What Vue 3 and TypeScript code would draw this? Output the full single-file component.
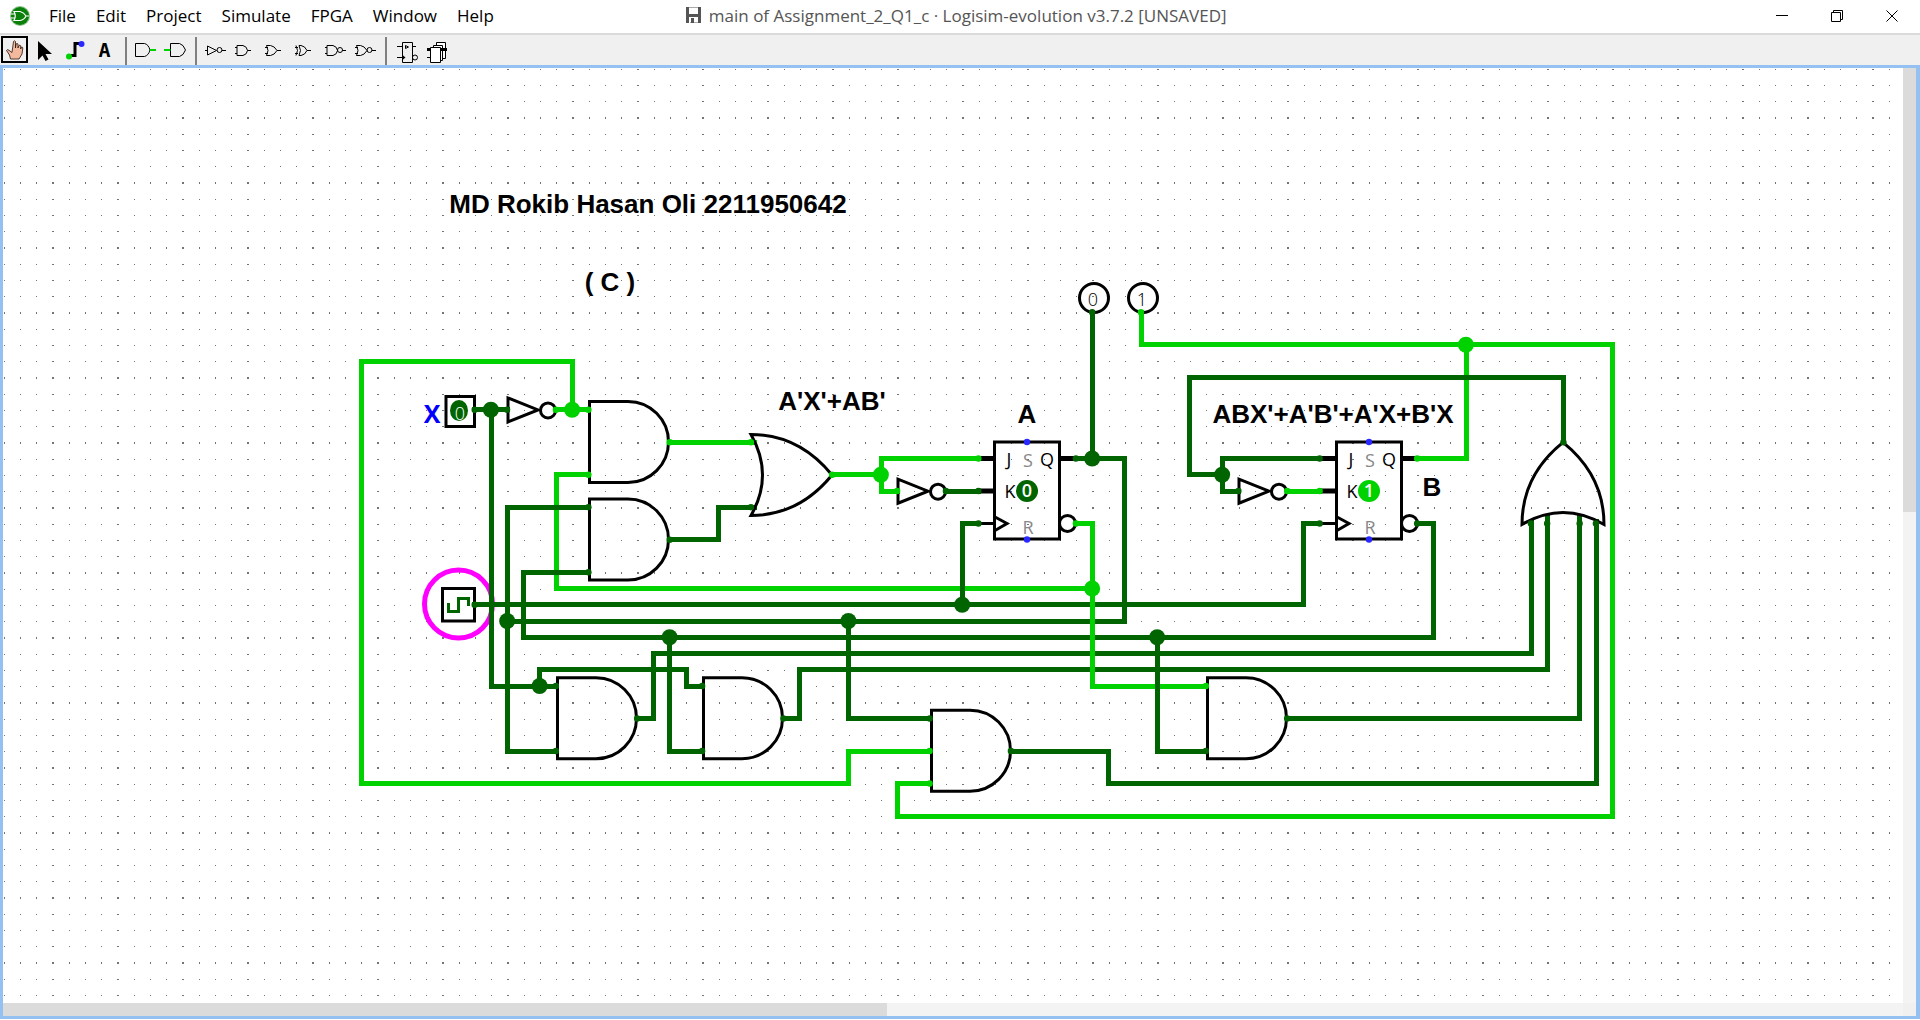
<script setup lang="ts">
type Point = [number, number]
interface Wire { on: boolean; path: Point[] }
interface Node { on: boolean; at: Point }

const menus = ['File', 'Edit', 'Project', 'Simulate', 'FPGA', 'Window', 'Help']

// The schematic is described in grid cells; one cell is 16.25 px at this zoom level.
const CELL = 16.25
const gx = (c: number) => 3.7 + CELL * c
const gy = (r: number) => 68.7 + CELL * r
const snap = (v: number) => Math.floor(v) + 0.5
const points = (path: Point[]) => path.map(([c, r]) => `${snap(gx(c))},${snap(gy(r))}`).join(' ')
const place = ([c, r]: Point) => `translate(${Math.floor(gx(c))} ${gy(r)})`
const placeBox = ([c, r]: Point) => `translate(${Math.round(gx(c) + 0.3)} ${gy(r)})`

const wires: Wire[] = [
  { on: true, path: [[35, 21], [35, 18], [22, 18], [22, 44], [52, 44], [52, 42], [57, 42]] },
  { on: true, path: [[34, 21], [36, 21]] },
  { on: true, path: [[41, 23], [46, 23]] },
  { on: true, path: [[36, 25], [34, 25], [34, 32], [67, 32]] },
  { on: true, path: [[51, 25], [54, 25]] },
  { on: true, path: [[60, 24], [54, 24], [54, 26], [55, 26]] },
  { on: true, path: [[70, 15], [70, 17], [99, 17], [99, 46], [55, 46], [55, 44], [57, 44]] },
  { on: true, path: [[87, 24], [90, 24], [90, 17]] },
  { on: true, path: [[79, 26], [81, 26]] },
  { on: true, path: [[67, 38], [74, 38]] },
  { on: false, path: [[29, 21], [31, 21]] },
  { on: false, path: [[30, 21], [30, 38], [34, 38]] },
  { on: false, path: [[36, 27], [31, 27], [31, 42], [34, 42]] },
  { on: false, path: [[41, 29], [44, 29], [44, 27], [46, 27]] },
  { on: false, path: [[58, 26], [60, 26]] },
  { on: false, path: [[60, 28], [59, 28], [59, 33]] },
  { on: false, path: [[66, 24], [69, 24], [69, 34], [31, 34]] },
  { on: false, path: [[67, 24], [67, 15]] },
  { on: false, path: [[29, 33], [80, 33], [80, 28], [81, 28]] },
  { on: false, path: [[87, 28], [88, 28], [88, 35], [32, 35], [32, 31], [36, 31]] },
  { on: false, path: [[33, 38], [33, 37], [42, 37], [42, 38], [43, 38]] },
  { on: false, path: [[39, 40], [40, 40], [40, 36], [94, 36], [94, 28]] },
  { on: false, path: [[48, 40], [49, 40], [49, 37], [95, 37], [95, 28]] },
  { on: false, path: [[41, 35], [41, 42], [43, 42]] },
  { on: false, path: [[52, 34], [52, 40], [57, 40]] },
  { on: false, path: [[62, 42], [68, 42], [68, 44], [98, 44], [98, 28]] },
  { on: false, path: [[79, 40], [97, 40], [97, 28]] },
  { on: false, path: [[71, 35], [71, 42], [74, 42]] },
  { on: false, path: [[96, 23], [96, 19], [73, 19], [73, 25], [75, 25]] },
  { on: false, path: [[81, 24], [75, 24], [75, 26], [76, 26]] },
  { on: true, path: [[66, 28], [67, 28], [67, 38]] },
]

const junctions: Node[] = [
  { on: true, at: [35, 21] }, { on: true, at: [54, 25] }, { on: true, at: [67, 32] }, { on: true, at: [90, 17] },
  { on: false, at: [30, 21] }, { on: false, at: [33, 38] }, { on: false, at: [31, 34] }, { on: false, at: [41, 35] },
  { on: false, at: [52, 34] }, { on: false, at: [59, 33] }, { on: false, at: [67, 24] }, { on: false, at: [71, 35] },
  { on: false, at: [75, 25] },
]

const ports: Node[] = [
  ...([[34, 21], [36, 21], [36, 25], [41, 23], [46, 23], [51, 25], [55, 26], [60, 24], [66, 28], [70, 15],
    [74, 38], [57, 42], [57, 44], [79, 26], [81, 26], [87, 24]] as Point[]).map((at) => ({ on: true, at })),
  ...([[29, 21], [31, 21], [36, 27], [36, 31], [41, 29], [46, 27], [58, 26], [60, 26], [60, 28], [66, 24],
    [67, 15], [29, 33], [34, 38], [34, 42], [39, 40], [43, 38], [43, 42], [48, 40], [57, 40], [62, 42],
    [74, 42], [79, 40], [96, 23], [94, 28], [95, 28], [97, 28], [98, 28], [76, 26], [81, 24], [81, 28],
    [87, 28]] as Point[]).map((at) => ({ on: false, at })),
]

const andGates: Point[] = [[41, 23], [41, 29], [39, 40], [48, 40], [62, 42], [79, 40]]
const inverters: Point[] = [[31, 21], [55, 26], [76, 26]]
const flipFlops: { at: Point; value: string; on: boolean }[] = [
  { at: [61, 23], value: '0', on: false },
  { at: [82, 23], value: '1', on: true },
]
const outputs: { at: Point; value: string }[] = [
  { at: [67, 15], value: '0' },
  { at: [70, 15], value: '1' },
]
const labels = [
  { text: 'MD Rokib Hasan Oli 2211950642', x: 648, y: 213 },
  { text: '( C )', x: 610, y: 291 },
  { text: "A'X'+AB'", x: 832, y: 410 },
  { text: 'A', x: 1027, y: 423 },
  { text: "ABX'+A'B'+A'X+B'X", x: 1333, y: 423 },
  { text: 'B', x: 1432, y: 496 },
]
</script>

<template>
  <div class="window">
    <header class="titlebar">
      <svg class="app-icon" width="22" height="22" viewBox="0 0 22 22" aria-hidden="true">
        <circle cx="11" cy="11" r="10" fill="#8cc08c" />
        <circle cx="11" cy="11" r="9" fill="#0a7f0a" />
        <path d="M5 6.500h6q4 1 6 4.500q-2 4-6 4.500H5q2.500-4.500 0-9zM2 9h4M2 13h4M17 11h3" fill="none" stroke="#fff" stroke-width="1.200" />
      </svg>
      <nav class="menus">
        <button v-for="m in menus" :key="m" type="button">{{ m }}</button>
      </nav>
      <h1 class="title">
        <svg width="15" height="16" viewBox="0 0 15 16" aria-hidden="true">
          <path d="M0 0h3v7h9V0h3v16h-3v-6H3v6H0z" fill="#555" />
          <path d="M3 .5h9M4 15.500h8" stroke="#aaa" />
          <path d="M5 11h3v5H5z" fill="#555" />
        </svg>
        <span>main of Assignment_2_Q1_c · Logisim-evolution v3.7.2 [UNSAVED]</span>
      </h1>
      <div class="controls">
        <button type="button" aria-label="Minimize">
          <svg width="12" height="12" viewBox="0 0 12 12"><path d="M0 5.500h12" stroke="#000" /></svg>
        </button>
        <button type="button" aria-label="Restore">
          <svg width="12" height="12" viewBox="0 0 12 12"><path d="M.5 2.500h9v9h-9zM2.500 2.500v-2h9v9h-2" fill="none" stroke="#000" /></svg>
        </button>
        <button type="button" aria-label="Close">
          <svg width="12" height="12" viewBox="0 0 12 12"><path d="M.5 .5l11 11M11.500 .5l-11 11" stroke="#000" /></svg>
        </button>
      </div>
    </header>

    <div class="toolbar" role="toolbar">
      <button type="button" aria-label="Poke">
        <svg viewBox="0 0 30 30">
          <rect x="2" y="2" width="25" height="25" fill="#f0f0f0" stroke="#000" stroke-width="2" />
          <path d="M13.500 6.500q1-1.500 2 0V13l.5-4q1.200-1 2 0v4l1-2.500q1.200-.8 1.700.3V14l.8-2q1.300 0 1.300 1l-.8 6-3 5H10.500l-1-4-3-4.500q1-1.700 2.500-.2l3 2.200z" fill="#f2b99f" stroke="#2a1008" stroke-width=".8" />
        </svg>
      </button>
      <button type="button" aria-label="Select">
        <svg viewBox="0 0 30 30"><path d="M8 6v19l4.500-4.500 3 5.500 3-1.500-3-5.500H22z" /></svg>
      </button>
      <button type="button" aria-label="Wiring">
        <svg viewBox="0 0 30 30">
          <path d="M10 20.500h5V8.500h6" fill="none" stroke="#000" stroke-width="3" />
          <circle cx="9" cy="21.500" r="3" fill="#00d200" /><circle cx="21.500" cy="9" r="3" fill="#2828ff" />
        </svg>
      </button>
      <button type="button" aria-label="Text">
        <svg viewBox="0 0 30 30"><text class="letter" x="14.500" y="22" text-anchor="middle">A</text></svg>
      </button>
      <span class="sep"></span>
      <button type="button" aria-label="Input pin">
        <svg viewBox="0 0 30 30"><path class="g" d="M5.500 8.500h9q4 1 5.500 6.500-1.500 5.500-5.500 6.500h-9z" /><path d="M20 15h6" stroke="#00d200" stroke-width="2" /></svg>
      </button>
      <button type="button" aria-label="Output pin">
        <svg viewBox="0 0 30 30"><path class="g" d="M10.500 8.500h9q4 1 6 6.500-2 5.500-6 6.500h-9z" /><path d="M4 15h6.500" stroke="#00d200" stroke-width="2" /></svg>
      </button>
      <span class="sep"></span>
      <button type="button" aria-label="NOT gate">
        <svg viewBox="0 0 30 30"><path class="g" d="M5 15.500h2.500M7.500 11v9l9-4.500zM22 15.500h4" /><circle class="g" cx="19.500" cy="15" r="2.500" /></svg>
      </button>
      <button type="button" aria-label="AND gate">
        <svg viewBox="0 0 30 30"><path class="g" d="M7 10.500h6q4 1 4.500 5-.5 4-4.500 5H7zM5 12.500h2M5 18.500h2M17.500 15.500H21" /></svg>
      </button>
      <button type="button" aria-label="OR gate">
        <svg viewBox="0 0 30 30"><path class="g" d="M6.500 10.500h4q4 .5 6.500 5-2.500 4.500-6.500 5h-4q3-5 0-10zM5 12.500h3M5 18.500h3M17 15.500h4" /></svg>
      </button>
      <button type="button" aria-label="XOR gate">
        <svg viewBox="0 0 30 30"><path class="g" d="M9 10.500h2q4 .5 6 5-2 4.500-6 5H9q3-5 0-10zM6 10.500q3 5 0 10M5 12.500h3M5 18.500h3M17 15.500h4" /></svg>
      </button>
      <button type="button" aria-label="NAND gate">
        <svg viewBox="0 0 30 30"><path class="g" d="M7 10.500h6q4 1 4.500 5-.5 4-4.500 5H7zM5 12.500h2M5 18.500h2M22.500 15.500H26" /><circle class="g" cx="20" cy="15" r="2.500" /></svg>
      </button>
      <button type="button" aria-label="NOR gate">
        <svg viewBox="0 0 30 30"><path class="g" d="M6.500 10.500h4q4 .5 6.500 5-2.500 4.500-6.500 5h-4q3-5 0-10zM5 12.500h3M5 18.500h3M22 15.500h4" /><circle class="g" cx="19.500" cy="15" r="2.500" /></svg>
      </button>
      <span class="sep"></span>
      <button type="button" aria-label="D flip-flop">
        <svg viewBox="0 0 30 30"><path class="g" d="M12.500 7.500h10v20h-10zM7 11.500h5.500M22.500 11.500H26M7 22.500h5.500M15.500 10.500v3l3-1.500z" /><path d="M12.500 20l3 2.500-3 2.500z" /><circle class="g" cx="25" cy="22.500" r="2.500" /></svg>
      </button>
      <button type="button" aria-label="Register">
        <svg viewBox="0 0 30 30">
          <path d="M16.500 7.500h9v16h-9z" fill="#fff" stroke="#000" /><path d="M13.500 10.500h9v15h-9z" fill="#fff" stroke="#000" />
          <path d="M10.500 12.500h10v15h-10z" fill="#fff" stroke="#000" /><path d="M7 14.500h3.500M20.500 14.500H27" stroke="#000" stroke-width="3" /><path class="g" d="M7 22.500h3.500" />
        </svg>
      </button>
    </div>

    <main class="editor">
      <svg class="canvas" role="img" aria-label="Circuit schematic">
        <defs>
          <pattern id="grid" x="4" y="69" width="65" height="65" patternUnits="userSpaceOnUse">
            <path d="M0 0h1v1h-1zM16 0h1v1h-1zM32 0h1v1h-1zM48 0h2v1h-2zM0 16h1v1h-1zM16 16h1v1h-1zM32 16h1v1h-1zM48 16h2v1h-2zM0 32h1v1h-1zM16 32h1v1h-1zM32 32h1v1h-1zM48 32h2v1h-2zM0 48h1v2h-1zM16 48h1v2h-1zM32 48h1v2h-1zM48 48h2v2h-2z" fill="#747474" />
          </pattern>
        </defs>
        <g transform="translate(-3 -68)">
          <rect width="100%" height="100%" x="3" y="68" fill="url(#grid)" />

          <circle cx="458.500" cy="604" r="34" fill="none" stroke="#f0f" stroke-width="5" />

          <polyline v-for="(w, i) in wires" :key="'w' + i" class="wire" :class="{ on: w.on }" :points="points(w.path)" />
          <path class="wire on" d="M752 442.500h2" />
          <path class="wire" d="M752 507.500h2M1531.500 524v-3M1547.500 524v-7M1579.500 524v-7M1596.500 524v-3" />

          <!-- component bodies -->
          <path v-for="(g, i) in andGates" :key="'a' + i" class="body" :transform="place(g)" d="M-41-41H-79.500V40H-41A40.500 40.500 0 0 0-41-41z" />
          <path class="body" :transform="place([51, 25])" d="M0 0Q-33-40.500-81-40.500Q-58 0-81 40.500Q-33 40.500 0 0z" />
          <path class="body" :transform="place([96, 23]) + ' rotate(-90)'" d="M0 0Q-33-41-82-41Q-58 0-82 41Q-33 41 0 0z" />
          <g v-for="(n, i) in inverters" :key="'n' + i" class="body" :transform="place(n)">
            <path d="M1-12V12L31 0z" />
            <circle cx="41" cy="0.500" r="7.500" />
          </g>

          <g v-for="(f, i) in flipFlops" :key="'f' + i" :transform="placeBox(f.at)">
            <path class="body lead" d="M-16 16H0M-16 48.500H0M65 16H81" />
            <path class="body" d="M-16 81H0M-.5-.5H64.500V96.500H-.5zM0 74.500L12 81L0 88" />
            <circle class="body" cx="72.500" cy="81" r="8" />
            <g class="pin-text">
              <text x="14" y="24">J</text>
              <text x="52" y="24">Q</text>
              <text x="15" y="56">K</text>
              <text x="33" y="25" class="faint">S</text>
              <text x="33" y="92" class="faint">R</text>
            </g>
            <circle class="state" :class="{ on: f.on }" cx="32" cy="48.500" r="11" />
            <text class="state-text" x="32" y="55">{{ f.value }}</text>
            <circle cx="32" cy="-0.500" r="3.200" fill="#2828ff" />
            <circle cx="32" cy="97" r="3.200" fill="#2828ff" />
          </g>

          <g v-for="(o, i) in outputs" :key="'o' + i" :transform="placeBox(o.at)">
            <circle class="body" cx="1" cy="-14.500" r="14.500" />
            <text class="value-text" x="0" y="-6">{{ o.value }}</text>
          </g>

          <rect class="body" x="446" y="396.500" width="28.500" height="30" />
          <ellipse cx="459" cy="410.500" rx="9" ry="10.500" fill="#006400" />
          <text class="value-text inverse" x="460" y="420">0</text>
          <text class="pin-label" x="432" y="423">X</text>

          <rect class="body" x="442.500" y="588.500" width="32" height="32.500" />
          <path d="M448.500 603v8.500h10v-13h10v7.500" fill="none" stroke="#006400" stroke-width="3" />

          <circle v-for="(p, i) in ports" :key="'p' + i" class="state" :class="{ on: p.on }" :cx="gx(p.at[0]) - 0.300" :cy="gy(p.at[1]) - 0.200" r="3.200" />
          <circle v-for="(j, i) in junctions" :key="'j' + i" class="state" :class="{ on: j.on }" :cx="gx(j.at[0]) - 0.300" :cy="gy(j.at[1]) - 0.200" r="8" />

          <text v-for="l in labels" :key="l.text" class="label" :x="l.x" :y="l.y">{{ l.text }}</text>
        </g>
      </svg>
      <div class="vbar"><div class="vthumb"></div></div>
      <div class="hbar"><div class="hthumb"></div></div>
      <div class="corner"></div>
    </main>
  </div>
</template>

<style>
html, body, #app { height: 100%; margin: 0; }
body { overflow: hidden; }
</style>

<style scoped>
.window { display: flex; flex-direction: column; height: 100%; box-sizing: border-box; padding-bottom: 1px; background: #fff; font-family: "Open Sans", "Noto Sans", sans-serif; }
button { margin: 0; border: 0; padding: 0; background: none; color: inherit; font: inherit; }
.titlebar { display: flex; align-items: center; height: 31px; padding-bottom: 2px; flex: none; border-bottom: 2px solid #dadada; font-size: 17px; line-height: 30px; }
.app-icon { margin-left: 9px; }
.menus { display: flex; gap: 20px; margin-left: 18px; color: #000; }
.title { display: flex; align-items: center; gap: 8px; margin: 0 0 0 192px; font-size: 17px; font-weight: 400; color: #555; white-space: nowrap; }
.title svg { margin-top: -2px; }
.controls { display: flex; margin: 0 1px 0 auto; }
.controls button { display: flex; align-items: center; justify-content: center; width: 55px; height: 30px; }
.toolbar { display: flex; height: 30px; flex: none; background: #f0f0f0; }
.toolbar button { width: 30px; height: 30px; }
.toolbar svg { display: block; width: 30px; height: 30px; }
.sep { width: 2px; margin: 2px 3px 0 5px; background: #808080; }
.g { fill: none; stroke: #000; stroke-width: 1; }
.letter { font: bold 20px "DejaVu Sans Mono", monospace; }
.editor { display: grid; grid-template: minmax(0, 1fr) 13px / minmax(0, 1fr) 13px; flex: 1; min-height: 0; border: 3px solid #94c0f2; border-right-width: 4px; background: #fff; }
.canvas { display: block; width: 100%; height: 100%; overflow: hidden; }
.vbar, .hbar, .corner { background: #f3f3f3; }
.corner { background: #f0f0f0; }
.vthumb { height: 47.5%; background: #dbdbdb; }
.hthumb { width: 46.5%; height: 100%; background: #dbdbdb; }
.wire { fill: none; stroke: #006400; stroke-width: 5px; stroke-linejoin: miter; stroke-linecap: square; shape-rendering: crispEdges; }
.wire.on { stroke: #00d200; }
.body { fill: none; stroke: #000; stroke-width: 3px; }
.lead { stroke-width: 5px; }
.state { fill: #006400; }
.state.on { fill: #00d200; }
text { text-anchor: middle; }
.pin-text { font-size: 18px; fill: #000; }
.faint { fill: #888; }
.state-text { font-size: 18px; font-weight: 600; fill: #fff; }
.value-text { font-size: 18px; font-weight: 300; fill: #000; }
.inverse { fill: #fff; }
.pin-label { font-size: 25px; font-weight: 700; fill: #00f; }
.label { font: bold 26px "Liberation Sans", Arial, sans-serif; fill: #000; }
</style>
